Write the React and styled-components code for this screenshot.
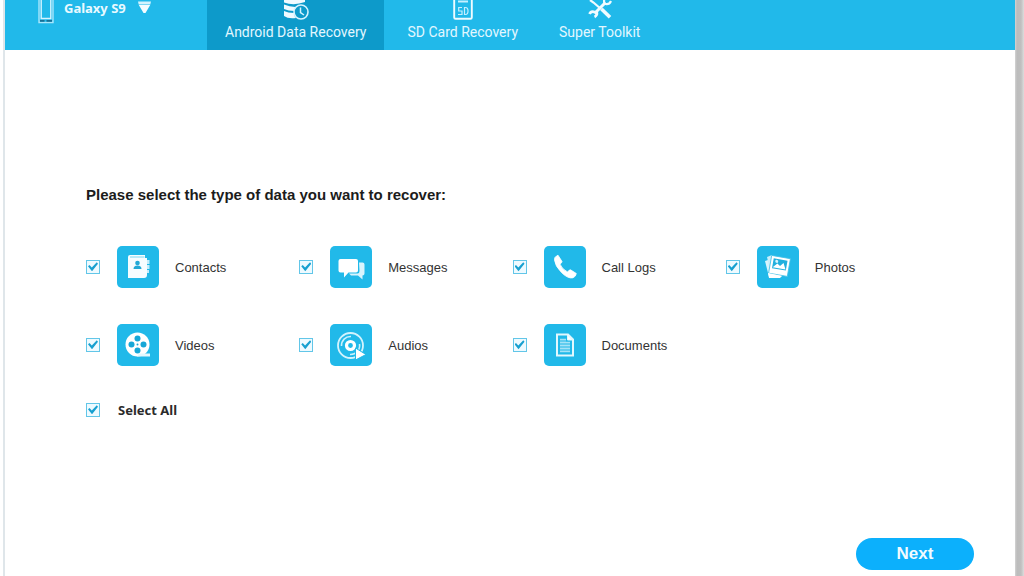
import React, { useState } from "react";
import styled, { createGlobalStyle } from "styled-components";

const GlobalStyle = createGlobalStyle`
  *, *::before, *::after { box-sizing: border-box; }
  body {
    margin: 0;
    background: #fff;
    color: #333;
    font-family: "Liberation Sans", Arial, sans-serif;
    font-size: 13px;
    line-height: 16px;
  }
  button, input { font: inherit; margin: 0; }
`;

const Desktop = styled.div`
  display: flex;
  min-height: 100vh;
  padding-left: 3px;
  background: #fff;
`;

const Window = styled.div`
  flex: 1;
  display: flex;
  flex-direction: column;
  border-left: 2px solid #dfe6ea;
  background: #fff;
`;

const WindowShadow = styled.div`
  width: 9px;
  background: linear-gradient(to right, #d4d4d4, #bcbcbc 2px, #bfbfbf 6px, #dcdcdc);
`;

const Header = styled.header`
  display: flex;
  height: 50px;
  overflow: hidden;
  background: #21b9ea;
  color: #fff;
`;

const DeviceButton = styled.button`
  display: flex;
  align-items: flex-start;
  width: 202px;
  padding: 0 0 0 32px;
  border: 0;
  background: none;
  color: #e9f9ff;
  text-align: left;
  cursor: pointer;
`;

const DeviceName = styled.span`
  margin: 0 12px 0 9px;
  font-family: "Noto Sans", "Open Sans", sans-serif;
  font-size: 13px;
  font-weight: 700;
`;

const Tabs = styled.nav`
  display: flex;
  gap: 5px;
`;

const Tab = styled.button`
  display: flex;
  flex-direction: column;
  align-items: center;
  gap: 4px;
  padding: 0 18px;
  border: 0;
  background: ${({ $active }) => ($active ? "#0d9aca" : "transparent")};
  color: #e3f7ff;
  font-family: Roboto, "Liberation Sans", sans-serif;
  font-size: 14px;
  white-space: nowrap;
  cursor: pointer;
`;

const Main = styled.main`
  flex: 1;
  display: flex;
  flex-direction: column;
  padding: 137px 76px 6px 81px;
`;

const Title = styled.h1`
  margin: 0 0 43px;
  font-size: 15px;
  line-height: 16px;
  font-weight: 700;
  color: #1c1c1c;
`;

const TypeGrid = styled.div`
  display: grid;
  grid-template-columns: repeat(4, 1fr);
  row-gap: 36px;
`;

const Option = styled.label`
  display: flex;
  align-items: center;
  cursor: pointer;
`;

const OptionName = styled.span`
  padding-top: 2px;
`;

const Checkbox = styled.input`
  appearance: none;
  display: grid;
  place-items: center;
  flex: none;
  width: 14px;
  height: 14px;
  border: 1px solid #62c6e8;
  background: #eefaff;
  cursor: pointer;

  &:checked::before {
    content: "";
    width: 10px;
    height: 10px;
    background: #18a0d0;
    clip-path: polygon(0 42%, 15% 30%, 38% 55%, 88% 2%, 100% 18%, 40% 92%);
  }
`;

const Tile = styled.span`
  flex: none;
  display: grid;
  place-items: center;
  width: 42px;
  height: 42px;
  margin: 0 16px 0 17px;
  border-radius: 5px;
  background: #21b9e9;
`;

const SelectAll = styled(Option)`
  align-self: flex-start;
  gap: 18px;
  margin-top: 36px;
  font-family: "Noto Sans", "Open Sans", sans-serif;
  font-weight: 700;
  color: #2b2b2b;
`;

const Footer = styled.footer`
  display: flex;
  justify-content: flex-end;
  margin: auto -35px 0 0;
`;

const NextButton = styled.button`
  width: 118px;
  height: 32px;
  border: 0;
  border-radius: 16px;
  background: #0cb0fc;
  color: #f2fbff;
  font-size: 17px;
  font-weight: 700;
  cursor: pointer;
`;

const PhoneIcon = () => (
  <svg width="18" height="24" viewBox="0 0 18 24" fill="none" aria-hidden="true">
    <path d="M2 0V22.5H16V0" stroke="#a9e6fb" strokeWidth="1.4" />
    <path d="M4.2 0V18.500H13.8V0" stroke="#d5f4ff" strokeWidth="1.4" />
    <path d="M3 20.800H7.5M9.500 20.800H15" stroke="#176f96" strokeWidth="1.8" />
  </svg>
);

const DropIcon = () => (
  <svg width="13" height="14" viewBox="0 0 13 14" aria-hidden="true">
    <path d="M0 1.500H13L12.300 4.500H.7Z" fill="#d3f3fe" />
    <path d="M.8 5H12.200L7.5 13H5.5Z" fill="#f4fcff" />
  </svg>
);

const DatabaseIcon = () => (
  <svg width="28" height="20" viewBox="0 0 28 20" fill="none" aria-hidden="true">
    <path d="M2 0H23V2Q12 6 2 2.500Z" fill="#effaff" />
    <path d="M2 4.500Q10 8 18 6.500Q13.500 8 12.500 11Q6 11 2 9Z" fill="#effaff" />
    <path d="M2 11Q6 13 12 13Q12 16 14 18Q6 19 2 16Z" fill="#effaff" />
    <circle cx="19" cy="12" r="7" fill="#0d9aca" stroke="#d4f3ff" strokeWidth="1.600" />
    <path d="M18.500 7.500V12.500L22 15" stroke="#d4f3ff" strokeWidth="1.500" />
  </svg>
);

const SdIcon = () => (
  <svg width="20" height="20" viewBox="0 0 20 20" fill="none" aria-hidden="true">
    <path d="M1.200 0V17.500Q1.200 18.800 2.500 18.800H17.500Q18.800 18.800 18.800 17.500V0" stroke="#effbff" strokeWidth="1.900" />
    <path d="M5 1.500H15" stroke="#c5efff" strokeWidth="2" />
    <path d="M9 7.500H5.700V11H9V14.500H5M11.500 7.500V14.500H12.500Q15 14.500 15 11T12.500 7.500Z" stroke="#c5efff" strokeWidth="1.200" />
  </svg>
);

const ToolsIcon = () => (
  <svg width="24" height="20" viewBox="0 0 24 20" fill="none" stroke="#f2fbff" aria-hidden="true">
    <path d="M6.500 13.500L17.500 2.500" strokeWidth="3" />
    <path d="M8.300 11.200Q10.200 15 6.500 17M7 12.200Q3 10.500 1.500 14" strokeWidth="2.600" />
    <path d="M16.200 0Q15.500 4 18.500 4.200T23 1" strokeWidth="2.200" />
    <path d="M2 0L5.500 2.500L13 9" strokeWidth="2.200" />
    <path d="M13.500 9L22 17.300" strokeWidth="3.600" />
  </svg>
);

const iconProps = { width: 30, height: 30, viewBox: "0 0 30 30", fill: "none", "aria-hidden": true };

const ContactsIcon = () => (
  <svg {...iconProps}>
    <path d="M5 5Q5 3 7 3H22V6H24V23Q24 26 21 26H5Z" fill="#f6fdff" />
    <path d="M7 5H21.500" stroke="#7bd6f1" strokeWidth="1" />
    <path d="M24 8H26.500V12H24M24 13H26.500V17H24M24 18H26V21H24" fill="#c4edfa" />
    <circle cx="14.500" cy="11" r="2.300" fill="#21a9d6" />
    <path d="M10.500 17Q10.500 13.500 14.500 13.500T18.500 17Z" fill="#21a9d6" />
  </svg>
);

const MessagesIcon = () => (
  <svg {...iconProps}>
    <path d="M23 10.500H26.500Q28.500 10.500 28.500 12.500V21.500Q28.500 23.500 26.500 23.500V27.500L22 23.500H15L13 21.500H21.500Q23.500 21.500 23.500 19Z" fill="#d9f4fd" />
    <path d="M4.500 7H20Q22 7 22 9V18.500Q22 20.500 20 20.500H12.500L8 25.500V20.500H4.500Q2.500 20.500 2.500 18.500V9Q2.500 7 4.500 7Z" fill="#fff" />
  </svg>
);

const PhoneCallIcon = () => (
  <svg {...iconProps}>
    <path d="M4.500 8Q4 5.500 6.500 4L8 3.200L12 9.500Q12 10.800 10 12.200Q12 17 17.500 20Q19 17.800 20.500 17.800L26.300 21.500Q26 24.500 23 25.800Q18 27 11.500 20.500Q5 14 4.500 8Z" fill="#fff" stroke="#fff" strokeWidth=".8" strokeLinejoin="round" />
  </svg>
);

const PhotosIcon = () => (
  <svg {...iconProps}>
    <path d="M8 7L2 9L6 25L20 24" fill="#d8f4fd" />
    <path d="M4 5L9 3L13 21L8 23Z" fill="#c9effb" />
    <g transform="rotate(10 17 14)">
      <path d="M7 5H26V23H7Z" fill="#fff" stroke="#42c0e7" strokeWidth=".8" />
      <path d="M9.500 7.500H23.500V17.500H9.500Z" fill="#21b0de" />
      <circle cx="13" cy="10" r="1.500" fill="#d8f4fd" />
      <path d="M10 16.500L14 12L17 14L20 10.500L23 16.500Z" fill="#fff" />
    </g>
    <path d="M5 21L19 24L17 26L6 26Z" fill="#fff" />
  </svg>
);

const VideosIcon = () => (
  <svg {...iconProps}>
    <circle cx="14.500" cy="14.500" r="12" fill="#fff" />
    <path d="M16 23.500H27V26.500H14Z" fill="#e4f8fe" />
    <g fill="#16a7d7">
      <circle cx="14.500" cy="8.500" r="3" />
      <circle cx="8.500" cy="14.500" r="3" />
      <circle cx="20.500" cy="14.500" r="3" />
      <circle cx="14.500" cy="20.500" r="3" />
      <circle cx="14.500" cy="14.500" r="1" />
    </g>
  </svg>
);

const AudiosIcon = () => (
  <svg {...iconProps}>
    <circle cx="14.500" cy="15.500" r="12.500" stroke="#d3f3fd" strokeWidth="1.800" />
    <circle cx="14.500" cy="15.500" r="4" stroke="#fff" strokeWidth="3.200" />
    <path d="M5.500 16A9 9 0 0 1 15 6.500M23.500 14A9 9 0 0 1 14 24.500" stroke="#ccf1fc" strokeWidth="1.600" />
    <path d="M19.500 18L30 24.500L19.500 30Z" fill="#fff" stroke="#21b9e9" strokeWidth="1" />
  </svg>
);

const DocumentsIcon = () => (
  <svg {...iconProps}>
    <path d="M7 4.500H18L23 9.500V25.500H7Z" stroke="#e2f8fe" strokeWidth="2" />
    <path d="M10 8.500H16V11.500H20V22.500H10Z" fill="#62cdef" />
    <path d="M17.500 5V10H22.500" fill="#fff" stroke="#e2f8fe" strokeWidth="1" />
    <path d="M10 9.500H16M10 12.500H20M10 15.500H20M10 18.500H20M10 21.500H20" stroke="#a5e3f7" strokeWidth="1" />
  </svg>
);

const tabs = [
  { name: "Android Data Recovery", Icon: DatabaseIcon },
  { name: "SD Card Recovery", Icon: SdIcon },
  { name: "Super Toolkit", Icon: ToolsIcon },
];

const types = [
  { name: "Contacts", Icon: ContactsIcon },
  { name: "Messages", Icon: MessagesIcon },
  { name: "Call Logs", Icon: PhoneCallIcon },
  { name: "Photos", Icon: PhotosIcon },
  { name: "Videos", Icon: VideosIcon },
  { name: "Audios", Icon: AudiosIcon },
  { name: "Documents", Icon: DocumentsIcon },
];

export default function App() {
  const [active, setActive] = useState(tabs[0].name);
  const [selected, setSelected] = useState(types.map((t) => t.name));

  const toggle = (name) =>
    setSelected((list) => (list.includes(name) ? list.filter((n) => n !== name) : [...list, name]));
  const all = selected.length === types.length;

  return (
    <>
      <GlobalStyle />
      <Desktop>
        <Window>
          <Header>
            <DeviceButton type="button">
              <PhoneIcon />
              <DeviceName>Galaxy S9</DeviceName>
              <DropIcon />
            </DeviceButton>
            <Tabs>
              {tabs.map(({ name, Icon }) => (
                <Tab key={name} type="button" $active={name === active} onClick={() => setActive(name)}>
                  <Icon />
                  {name}
                </Tab>
              ))}
            </Tabs>
          </Header>
          <Main>
            <Title>Please select the type of data you want to recover:</Title>
            <TypeGrid>
              {types.map(({ name, Icon }) => (
                <Option key={name}>
                  <Checkbox type="checkbox" checked={selected.includes(name)} onChange={() => toggle(name)} />
                  <Tile>
                    <Icon />
                  </Tile>
                  <OptionName>{name}</OptionName>
                </Option>
              ))}
            </TypeGrid>
            <SelectAll>
              <Checkbox
                type="checkbox"
                checked={all}
                onChange={() => setSelected(all ? [] : types.map((t) => t.name))}
              />
              Select All
            </SelectAll>
            <Footer>
              <NextButton type="button">Next</NextButton>
            </Footer>
          </Main>
        </Window>
        <WindowShadow />
      </Desktop>
    </>
  );
}
